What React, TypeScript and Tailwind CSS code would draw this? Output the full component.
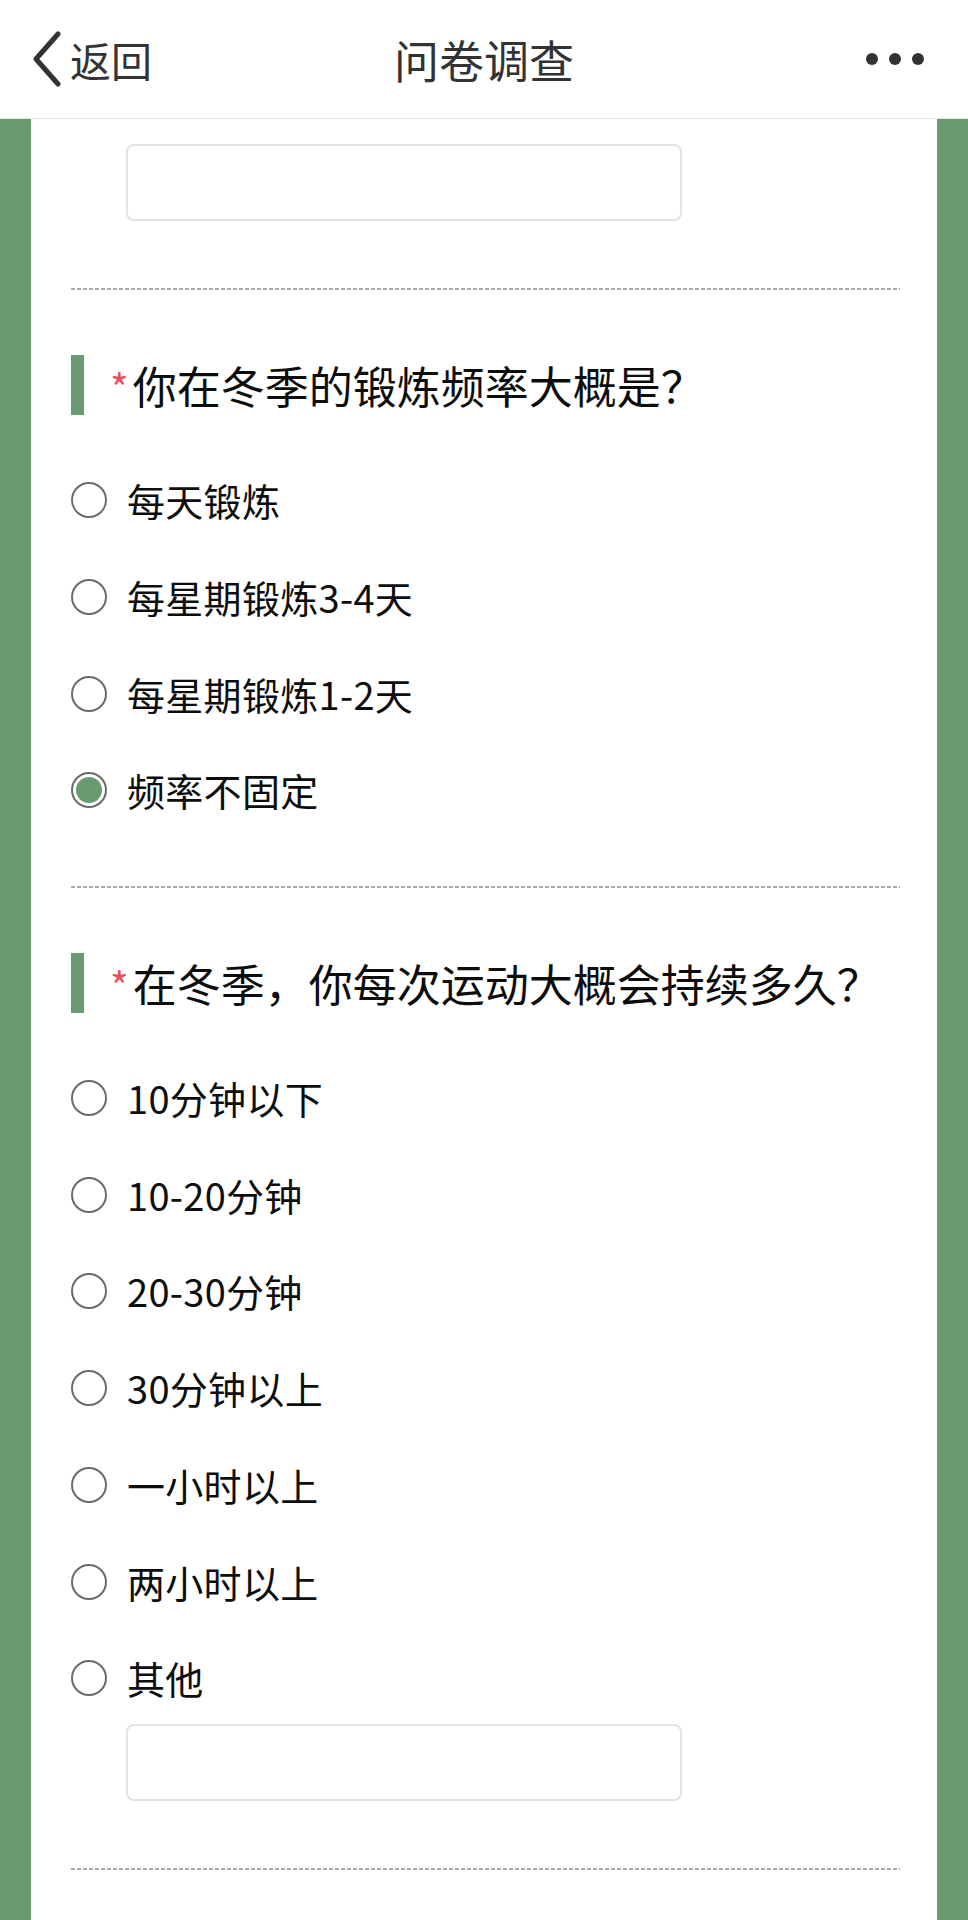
import React from 'react';

const q1 = ['每天锻炼', '每星期锻炼3-4天', '每星期锻炼1-2天', '频率不固定'];
const q2 = ['10分钟以下', '10-20分钟', '20-30分钟', '30分钟以上', '一小时以上', '两小时以上', '其他'];

const Radio = ({ checked }: { checked?: boolean }) => (
  <span className="w-[36px] h-[36px] rounded-full border-[2.5px] border-[#6b6b6b] bg-white flex items-center justify-center shrink-0">
    {checked && <span className="w-[26px] h-[26px] rounded-full bg-[#6a9a72]" />}
  </span>
);

const Option = ({ label, checked }: { label: string; checked?: boolean }) => (
  <div className="h-[96.7px] flex items-center">
    <Radio checked={checked} />
    <span className="ml-[20px] text-[38px] text-[#0d0d0d] leading-none tracking-[0.3px]">{label}</span>
  </div>
);

const Dashed = () => (
  <div className="h-[2px] bg-[repeating-linear-gradient(to_right,#ababab_0px,#ababab_4px,transparent_4px,transparent_6px)]" />
);

const TextBox = ({ className = '' }: { className?: string }) => (
  <div className={`ml-[55px] w-[556px] h-[77px] rounded-[8px] border-2 border-[#e2e2e2] bg-white ${className}`} />
);

const Title = ({ text }: { text: string }) => (
  <div className="flex items-center h-[60px]">
    <div className="w-[13px] h-[60px] bg-[#6a9a72]" />
    <span className="ml-[26px] text-[40px] text-[#e5535a] leading-none mt-[4px]">*</span>
    <span className="ml-[4px] text-[44px] text-[#0d0d0d] leading-none">{text}</span>
  </div>
);

export default function App() {
  return (
    <div className="w-[968px] min-h-[1920px] bg-[#6a9a72] font-['Noto_Sans_CJK_SC','Noto_Sans',sans-serif]">
      {/* nav bar */}
      <div className="h-[119px] bg-white border-b border-[#e6e6e6] flex items-center justify-between px-[30px] relative">
        <div className="flex items-center text-[#333]">
          <svg width="34" height="56" viewBox="0 0 34 56" fill="none">
            <path d="M28 3 L6 28 L28 53" stroke="#333" strokeWidth="5" strokeLinecap="round" strokeLinejoin="round" />
          </svg>
          <span className="ml-[6px] text-[41px] leading-none">返回</span>
        </div>
        <span className="absolute left-1/2 -translate-x-1/2 text-[45px] text-[#333] leading-none">问卷调查</span>
        <div className="flex items-center gap-[11px] mr-[14px]">
          <span className="w-[12px] h-[12px] rounded-full bg-[#333]" />
          <span className="w-[12px] h-[12px] rounded-full bg-[#333]" />
          <span className="w-[12px] h-[12px] rounded-full bg-[#333]" />
        </div>
      </div>

      {/* card */}
      <div className="mx-[31px] bg-white min-h-[1801px] pl-[40px] pr-[37px] pt-[25px]">
        <TextBox />
        <div className="mt-[67px]">
          <Dashed />
        </div>

        <div className="mt-[65px]">
          <Title text="你在冬季的锻炼频率大概是？" />
        </div>
        <div className="mt-[37px]">
          {q1.map((o, i) => (
            <Option key={o} label={o} checked={i === 3} />
          ))}
        </div>
        <div className="mt-[47px]">
          <Dashed />
        </div>

        <div className="mt-[65px]">
          <Title text="在冬季，你每次运动大概会持续多久？" />
        </div>
        <div className="mt-[37px]">
          {q2.map((o) => (
            <Option key={o} label={o} />
          ))}
        </div>
        <TextBox className="-mt-[3px]" />
        <div className="mt-[67px]">
          <Dashed />
        </div>
      </div>
    </div>
  );
}
